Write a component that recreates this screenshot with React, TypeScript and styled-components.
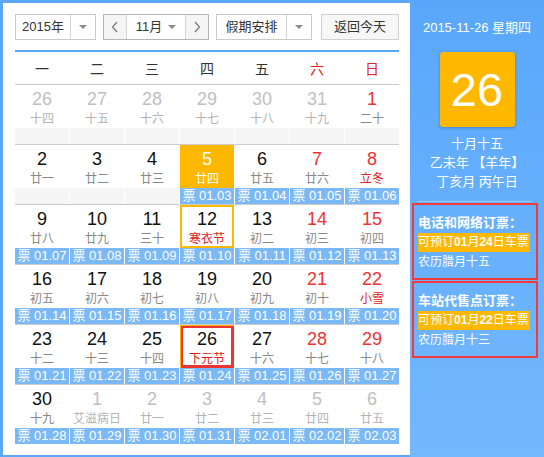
import styled, { createGlobalStyle, css } from "styled-components";

type Mark = "hot" | "framed" | "picked";

interface Day {
  day: number;
  lunar: string;
  other?: boolean;
  festival?: boolean;
  ticket?: string;
  mark?: Mark;
}

const GlobalStyle = createGlobalStyle`
  body {
    margin: 0;
    font-family: "Liberation Sans", "Noto Sans CJK SC", sans-serif;
    color: #333;
  }
`;

const BLUE = "#5aa7fb";
const ORANGE = "#ffb800";
const RED = "#ee3333";

const novLunar: Record<number, string> = {
  1: "二十", 2: "廿一", 3: "廿二", 4: "廿三", 5: "廿四", 6: "廿五", 7: "廿六",
  8: "立冬", 9: "廿八", 10: "廿九", 11: "三十", 12: "寒衣节", 13: "初二", 14: "初三",
  15: "初四", 16: "初五", 17: "初六", 18: "初七", 19: "初八", 20: "初九", 21: "初十",
  22: "小雪", 23: "十二", 24: "十三", 25: "十四", 26: "下元节", 27: "十六", 28: "十七",
  29: "十八", 30: "十九",
};
const festivals = [8, 12, 22, 26];

const ticketFor = (offset: number) => {
  const n = 3 + offset;
  const pad = (v: number) => String(v).padStart(2, "0");
  return n <= 31 ? `01.${pad(n)}` : `02.${pad(n - 31)}`;
};

const buildDays = (): Day[] => {
  const days: Day[] = [];
  ["十四", "十五", "十六", "十七", "十八", "十九"].forEach((lunar, i) =>
    days.push({ day: 26 + i, lunar, other: true })
  );
  for (let d = 1; d <= 30; d++) {
    days.push({
      day: d,
      lunar: novLunar[d],
      festival: festivals.includes(d),
      ticket: d >= 5 ? ticketFor(d - 5) : undefined,
      mark: d === 5 ? "hot" : d === 12 ? "framed" : d === 26 ? "picked" : undefined,
    });
  }
  ["艾滋病日", "廿一", "廿二", "廿三", "廿四", "廿五"].forEach((lunar, i) =>
    days.push({ day: 1 + i, lunar, other: true, ticket: ticketFor(26 + i) })
  );
  return days;
};

const weekdays = ["一", "二", "三", "四", "五", "六", "日"];

const Arrow = () => (
  <ArrowCell>
    <Triangle />
  </ArrowCell>
);

const Chevron = ({ dir }: { dir: "left" | "right" }) => (
  <svg width="8" height="12" viewBox="0 0 8 12">
    <polyline
      points={dir === "left" ? "6,1 1.5,6 6,11" : "2,1 6.5,6 2,11"}
      fill="none"
      stroke="#777"
      strokeWidth="1.2"
    />
  </svg>
);

export default function App() {
  const days = buildDays();
  const weeks: Day[][] = [];
  for (let i = 0; i < days.length; i += 7) weeks.push(days.slice(i, i + 7));

  return (
    <Page>
      <GlobalStyle />
      <Main>
        <Toolbar>
          <SelectBox>
            <SelectLabel $width={54}>2015年</SelectLabel>
            <Arrow />
          </SelectBox>
          <SelectBox $dark>
            <NavButton>
              <Chevron dir="left" />
            </NavButton>
            <MonthLabel>
              11月 <Triangle />
            </MonthLabel>
            <NavButton $right>
              <Chevron dir="right" />
            </NavButton>
          </SelectBox>
          <SelectBox>
            <SelectLabel $width={69}>假期安排</SelectLabel>
            <Arrow />
          </SelectBox>
          <TodayButton>返回今天</TodayButton>
        </Toolbar>
        <Rule />
        <WeekHead>
          {weekdays.map((w, i) => (
            <HeadCell key={w} $weekend={i >= 5}>
              {w}
            </HeadCell>
          ))}
        </WeekHead>
        {weeks.map((week, wi) => (
          <WeekRow key={wi}>
            {week.map((d, di) => (
              <Cell key={di}>
                <CellTop $mark={d.mark}>
                  <DayNum $other={d.other} $weekend={di >= 5} $hot={d.mark === "hot"}>
                    {d.day}
                  </DayNum>
                  <Lunar $other={d.other} $festival={d.festival} $hot={d.mark === "hot"}>
                    {d.lunar}
                  </Lunar>
                </CellTop>
                <Strip $active={!!d.ticket}>{d.ticket ? `票 ${d.ticket}` : ""}</Strip>
              </Cell>
            ))}
          </WeekRow>
        ))}
      </Main>
      <Side>
        <DateLine>2015-11-26 星期四</DateLine>
        <BigDay>26</BigDay>
        <LunarInfo>
          <div>十月十五</div>
          <div>乙未年 【羊年】</div>
          <div>丁亥月 丙午日</div>
        </LunarInfo>
        <Separator />
        <TicketBox>
          <TicketTitle>电话和网络订票：</TicketTitle>
          <Highlight>
            可预订<b>01</b>月<b>24</b>日车票
          </Highlight>
          <TicketNote>农历腊月十五</TicketNote>
        </TicketBox>
        <TicketBox>
          <TicketTitle>车站代售点订票：</TicketTitle>
          <Highlight>
            可预订<b>01</b>月<b>22</b>日车票
          </Highlight>
          <TicketNote>农历腊月十三</TicketNote>
        </TicketBox>
      </Side>
    </Page>
  );
}

const Page = styled.div`
  display: flex;
  width: 544px;
  height: 457px;
  overflow: hidden;
`;

const Main = styled.div`
  width: 410px;
  height: 457px;
  box-sizing: border-box;
  border: 3px solid ${BLUE};
  border-right: none;
  border-bottom-width: 2px;
  padding: 11px 11px 0 12px;
  background: #fff;
`;

const Toolbar = styled.div`
  display: flex;
  gap: 7px;
  height: 26px;
  margin-bottom: 10px;
  font-family: "Liberation Sans", "Noto Sans CJK SC", sans-serif;
  font-size: 13px;
  color: #333;
`;

const SelectBox = styled.div<{ $dark?: boolean }>`
  display: flex;
  box-sizing: border-box;
  height: 26px;
  border: 1px solid ${(p) => (p.$dark ? "#b5b5b5" : "#cacaca")};
  background: #fff;
`;

const SelectLabel = styled.div<{ $width: number }>`
  width: ${(p) => p.$width}px;
  line-height: 24px;
  text-align: center;
`;

const ArrowCell = styled.div`
  width: 24px;
  border-left: 1px solid #d4d4d4;
  display: flex;
  align-items: center;
  justify-content: center;
`;

const Triangle = styled.span`
  display: inline-block;
  width: 0;
  height: 0;
  border-left: 4px solid transparent;
  border-right: 4px solid transparent;
  border-top: 4px solid #8a8a8a;
  vertical-align: middle;
`;

const NavButton = styled.div<{ $right?: boolean }>`
  width: 22px;
  background: #f5f5f5;
  display: flex;
  align-items: center;
  justify-content: center;
  ${(p) =>
    p.$right
      ? css`
          border-left: 1px solid #d4d4d4;
        `
      : css`
          border-right: 1px solid #d4d4d4;
        `}
`;

const MonthLabel = styled.div`
  width: 58px;
  line-height: 24px;
  text-align: center;
  display: flex;
  align-items: center;
  justify-content: center;
  gap: 6px;
`;

const TodayButton = styled.div`
  margin-left: 2px;
  width: 81px;
  box-sizing: border-box;
  border: 1px solid #d0d0d0;
  background: #f7f7f7;
  line-height: 24px;
  text-align: center;
`;

const Rule = styled.div`
  height: 2px;
  background: ${BLUE};
`;

const WeekHead = styled.div`
  display: grid;
  grid-template-columns: repeat(7, 54px);
  column-gap: 1px;
  height: 32px;
  align-items: center;
`;

const HeadCell = styled.div<{ $weekend: boolean }>`
  text-align: center;
  font-family: "Noto Sans CJK SC", sans-serif;
  font-size: 14px;
  color: ${(p) => (p.$weekend ? "#e82222" : "#333")};
`;

const WeekRow = styled.div`
  display: grid;
  grid-template-columns: repeat(7, 54px);
  column-gap: 1px;
  border-top: 1px solid #cccccc;
`;

const Cell = styled.div`
  display: flex;
  flex-direction: column;
  height: 59px;
`;

const markStyles: Record<Mark, ReturnType<typeof css>> = {
  hot: css`
    background: ${ORANGE};
  `,
  framed: css`
    box-shadow: inset 0 0 0 2px ${ORANGE};
  `,
  picked: css`
    box-shadow: inset 1px 1px 0 0 ${ORANGE}, inset 0 0 0 3px ${RED};
  `,
};

const CellTop = styled.div<{ $mark?: Mark }>`
  height: 43px;
  box-sizing: border-box;
  padding-top: 4px;
  text-align: center;
  ${(p) => p.$mark && markStyles[p.$mark]}
`;

const DayNum = styled.div<{ $other?: boolean; $weekend: boolean; $hot: boolean }>`
  font-family: "Liberation Sans", Arial, sans-serif;
  font-size: 18px;
  line-height: 20px;
  color: ${(p) =>
    p.$hot ? "#fff" : p.$other ? "#c0c0c0" : p.$weekend ? RED : "#111"};
`;

const Lunar = styled.div<{ $other?: boolean; $festival?: boolean; $hot: boolean }>`
  font-family: "Noto Sans CJK SC", sans-serif;
  font-size: 12px;
  line-height: 18px;
  color: ${(p) =>
    p.$hot ? "#fff" : p.$other ? "#b3b3b3" : p.$festival ? "#e02020" : "#888"};
`;

const Strip = styled.div<{ $active: boolean }>`
  height: 16px;
  line-height: 16px;
  text-align: center;
  font-size: 13px;
  color: #fff;
  background: ${(p) => (p.$active ? "#7ab8f6" : "#f5f5f5")};
  white-space: nowrap;
  overflow: hidden;
`;

const Side = styled.div`
  width: 134px;
  height: 457px;
  box-sizing: border-box;
  padding-top: 19px;
  background: linear-gradient(#59a7fb, #74b8fe);
  color: #fff;
  text-align: center;
  font-size: 13px;
`;

const DateLine = styled.div`
  line-height: 18px;
`;

const BigDay = styled.div`
  margin: 15px auto 0;
  width: 75px;
  height: 75px;
  border-radius: 3px;
  background: ${ORANGE};
  box-shadow: 0 1px 3px rgba(0, 0, 0, 0.25);
  font-family: "Liberation Sans", Arial, sans-serif;
  font-size: 47px;
  line-height: 75px;
`;

const LunarInfo = styled.div`
  margin-top: 7px;
  line-height: 19px;
`;

const Separator = styled.div`
  margin: 10px 12px 0 8px;
  height: 1px;
  background: rgba(255, 255, 255, 0.35);
`;

const TicketBox = styled.div`
  margin: 1px 6px 0 2px;
  border: 2px solid #f23a3a;
  padding: 8px 0 6px 4px;
  text-align: left;
  font-size: 12px;
`;

const TicketTitle = styled.div`
  font-size: 13px;
  font-weight: bold;
  line-height: 20px;
`;

const Highlight = styled.div`
  display: inline-block;
  background: ${ORANGE};
  line-height: 19px;
  padding-right: 1px;
  white-space: nowrap;
`;

const TicketNote = styled.div`
  line-height: 20px;
`;
